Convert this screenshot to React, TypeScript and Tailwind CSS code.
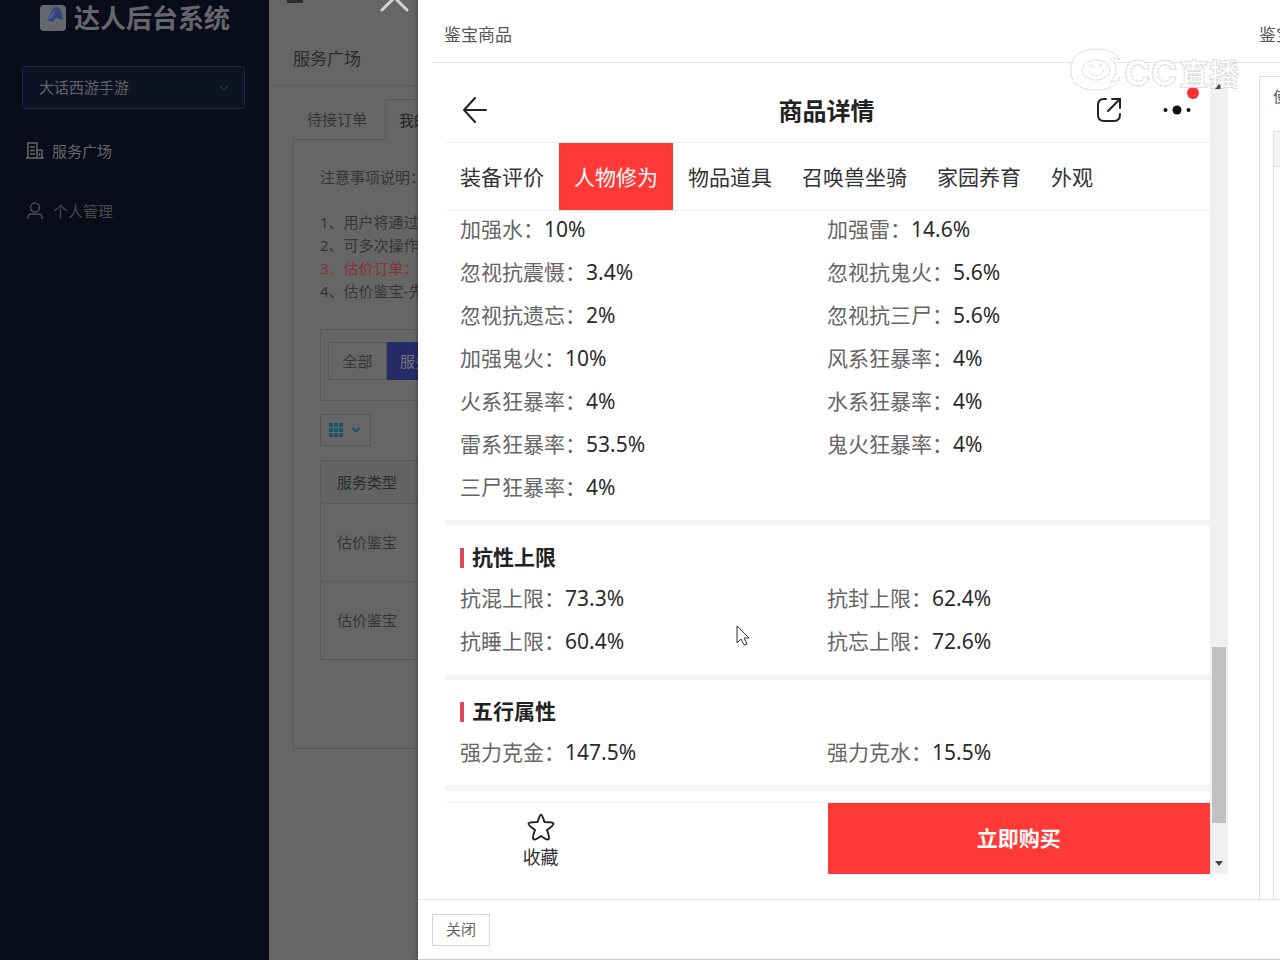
import React from 'react';
import { ChevronDown } from 'lucide-react';

type Stat = { label: string; value: string };

const tabs = ['装备评价', '人物修为', '物品道具', '召唤兽坐骑', '家园养育', '外观'];

const baseStats: Stat[] = [
  { label: '加强水', value: '10%' },
  { label: '加强雷', value: '14.6%' },
  { label: '忽视抗震慑', value: '3.4%' },
  { label: '忽视抗鬼火', value: '5.6%' },
  { label: '忽视抗遗忘', value: '2%' },
  { label: '忽视抗三尸', value: '5.6%' },
  { label: '加强鬼火', value: '10%' },
  { label: '风系狂暴率', value: '4%' },
  { label: '火系狂暴率', value: '4%' },
  { label: '水系狂暴率', value: '4%' },
  { label: '雷系狂暴率', value: '53.5%' },
  { label: '鬼火狂暴率', value: '4%' },
  { label: '三尸狂暴率', value: '4%' },
];

const limitStats: Stat[] = [
  { label: '抗混上限', value: '73.3%' },
  { label: '抗封上限', value: '62.4%' },
  { label: '抗睡上限', value: '60.4%' },
  { label: '抗忘上限', value: '72.6%' },
];

const elementStats: Stat[] = [
  { label: '强力克金', value: '147.5%' },
  { label: '强力克水', value: '15.5%' },
];

const notices = [
  { text: '用户将通过', warn: false },
  { text: '可多次操作', warn: false },
  { text: '估价订单：', warn: true },
  { text: '估价鉴宝-先', warn: false },
];

const StatGrid: React.FC<{ items: Stat[] }> = ({ items }) => (
  <dl className="grid grid-cols-2 pl-[15px]">
    {items.map((item) => (
      <div key={item.label} className="flex h-[43px] items-center text-[21px] leading-7 whitespace-nowrap even:-ml-2">
        <dt className="text-[#666]">{item.label}：</dt>
        <dd className="text-[#2b2b2b]">{item.value}</dd>
      </div>
    ))}
  </dl>
);

const SectionTitle: React.FC<{ children: React.ReactNode }> = ({ children }) => (
  <h3 className="flex h-9 items-center gap-2 px-[15px] text-[21px] font-bold text-[#222]">
    <span className="h-5 w-1 bg-[#dd4a55]"></span>
    {children}
  </h3>
);

const Sidebar = () => (
  <aside className="w-[269px] shrink-0 bg-[#0a0c19] text-[#62646c]">
    <div className="flex h-9 items-center gap-2 pl-10 text-[26px] font-bold text-[#66676d]">
      <svg viewBox="0 0 26 26" className="h-[26px] w-[26px]">
        <rect width="26" height="26" rx="4" fill="#65666f" />
        <path d="M7 15 13 3q5-3 8 2l2 10-7-2-3 4Z" fill="#34447a" />
        <path d="M7 15q8-2 8-10l-5 5Z" fill="#505c8c" />
        <path d="M13 18q5 1 9-3l-3 6Z" fill="#74636c" />
      </svg>
      达人后台系统
    </div>

    <button className="mx-[22px] mt-[30px] flex h-[43px] w-[223px] items-center justify-between rounded-[3px] border border-[#1d2544] bg-[#0e1323] pr-3 pl-4 text-[15px]">
      大话西游手游
      <ChevronDown className="h-4 w-4 text-[#42454f]" strokeWidth={1.5} />
    </button>

    <nav className="mt-3 flex flex-col text-[15px]">
      <a href="#square" className="flex h-[60px] items-center gap-2 pl-[26px] text-[#66676d]">
        <svg viewBox="0 0 18 18" className="h-[18px] w-[18px]" fill="none" stroke="currentColor" strokeWidth="1.5">
          <path d="M2 16V1h9v15M11 8h5v8M0 16h18M4 5h5M4 8.500h5M4 12h5M13.500 11v3" />
        </svg>
        服务广场
      </a>
      <a href="#profile" className="flex h-[60px] items-center gap-[9px] pl-[26px] text-[#484a53]">
        <svg viewBox="0 0 18 18" className="h-[18px] w-[18px]" fill="none" stroke="currentColor" strokeWidth="1.5">
          <circle cx="9" cy="5.500" r="4.500" />
          <path d="M2 17v-2q0-3 4-3h6q4 0 4 3v2" />
        </svg>
        个人管理
      </a>
    </nav>
  </aside>
);

const Square = () => (
  <main className="min-w-0 flex-1 overflow-hidden bg-[#666] text-[15px] whitespace-nowrap text-[#353535]">
    <div className="flex h-8 items-start pl-[18px]">
      <span className="h-[3px] w-4 bg-[#2b2b2b]"></span>
    </div>
    <h1 className="flex h-[54px] items-center border-b border-[#5b5b5b] pl-6 text-[17px] text-[#2d2d2d]">服务广场</h1>

    <div className="pt-[13px] pl-6">
      <div className="flex h-[41px]">
        <button className="w-[92px] border-b border-[#5b5b5b] pr-1">待接订单</button>
        <button className="flex-1 border-t border-l border-[#5b5b5b] pl-[13px] text-left text-[#222]">我的</button>
      </div>
      <section className="h-[609px] border-b border-l border-[#5b5b5b] pl-[26px]">
        <p className="flex h-[71px] items-center pt-1">注意事项说明：</p>
        <ol className="leading-[23px]">
          {notices.map((item, idx) => (
            <li key={idx} className={item.warn ? 'text-[#8a2f35]' : 'text-[#353535]'}>
              {idx + 1}、{item.text}
            </li>
          ))}
        </ol>

        <div className="mt-[26px] flex h-[72px] items-start border border-[#585858] pt-3 pl-[7px]">
          <button className="h-[38px] w-[59px] border border-[#585858]">全部</button>
          <button className="h-[38px] flex-1 bg-[#262c66] pl-[13px] text-left text-[#777]">服务</button>
        </div>

        <button className="mt-[13px] flex h-8 w-[51px] items-center justify-between border border-[#565656] px-2 text-[#1b5664]">
          <svg viewBox="0 0 14 14" className="h-[14px] w-[14px]" fill="currentColor">
            <path d="M0 0h4v4H0zM5 0h4v4H5zM10 0h4v4h-4zM0 5h4v4H0zM5 5h4v4H5zM10 5h4v4h-4zM0 10h4v4H0zM5 10h4v4H5zM10 10h4v4h-4z" />
          </svg>
          <ChevronDown className="h-3 w-3" strokeWidth={4} />
        </button>

        <table className="mt-[14px] w-full border border-[#5a5a5a] text-left">
          <thead>
            <tr className="h-[43px] bg-[#626363] text-[#2b2b2b]">
              <th className="pl-4 font-normal">服务类型</th>
            </tr>
          </thead>
          <tbody>
            <tr className="h-[78px] border-t border-[#5a5a5a]">
              <td className="pl-4">估价鉴宝</td>
            </tr>
            <tr className="h-[78px] border-t border-[#5a5a5a]">
              <td className="pl-4">估价鉴宝</td>
            </tr>
          </tbody>
        </table>
      </section>
    </div>
  </main>
);

const ProductDetail = () => (
  <div className="flex min-h-0 flex-1">
    <article className="flex min-w-0 flex-1 flex-col">
      <header className="flex h-[67px] shrink-0 items-center justify-between border-b border-[#eee] pt-0.5 pr-[19px] pl-[17px]">
        <button aria-label="返回" className="w-[95px]">
          <svg viewBox="0 0 26 26" className="h-[26px] w-[26px]" fill="none" stroke="#222" strokeWidth="2" strokeLinecap="round" strokeLinejoin="round">
            <path d="M24 13H2M13 1 2 13l11 12" />
          </svg>
        </button>
        <h2 className="pt-0.5 text-[24px] font-bold text-[#222]">商品详情</h2>
        <div className="flex w-[95px] items-center justify-between">
          <button aria-label="分享">
            <svg viewBox="0 0 26 26" className="h-[26px] w-[26px]" fill="none" stroke="#222" strokeWidth="2" strokeLinecap="round">
              <path d="M10 2H8Q2 2 2 8v10q0 6 6 6h10q6 0 6-7M16 2h8v9M24 2 12 14" />
            </svg>
          </button>
          <button aria-label="更多" className="relative">
            <svg viewBox="0 0 28 10" className="h-[10px] w-7" fill="#111">
              <circle cx="2.500" cy="5" r="2" />
              <circle cx="14" cy="5" r="4.500" />
              <circle cx="25.500" cy="5" r="2" />
            </svg>
            <span className="absolute -top-[18px] -right-2 h-3 w-3 rounded-full bg-[#ff2f35]"></span>
          </button>
        </div>
      </header>

      <nav className="flex h-[68px] shrink-0 border-b border-[#eee] text-[21px] whitespace-nowrap text-[#333]">
        {tabs.map((tab) => (
          <button key={tab} className={tab === '人物修为' ? 'bg-[#ff3937] px-[15px] pt-0.5 text-white' : 'px-[15px] pt-0.5'}>
            {tab}
          </button>
        ))}
      </nav>

      <div className="min-h-0 flex-1 overflow-hidden">
        <section className="-mt-1 border-b-6 border-[#f5f5f5] pb-3">
          <StatGrid items={baseStats} />
        </section>
        <section className="border-b-6 border-[#f5f5f5] pt-[14px] pb-3">
          <SectionTitle>抗性上限</SectionTitle>
          <StatGrid items={limitStats} />
        </section>
        <section className="border-b-6 border-[#f5f5f5] pt-[14px] pb-3">
          <SectionTitle>五行属性</SectionTitle>
          <StatGrid items={elementStats} />
        </section>
      </div>

      <footer className="grid h-[72px] shrink-0 grid-cols-4 border-t border-[#eee]">
        <button className="flex flex-col items-center justify-center pt-2 text-[18px] leading-8 text-[#333]">
          <svg viewBox="0 0 30 28" className="h-7 w-[30px]" fill="none" stroke="#222" strokeWidth="2" strokeLinejoin="round">
            <path d="M15 1.500q1 0 3.500 7.500 8.500 0 9 1.500t-6.500 6.500q3 8 1.500 9.200T15 23q-6 4.500-7.500 3.200T9 17q-7-5-6.500-6.500T11.500 9Q14 1.500 15 1.500Z" />
          </svg>
          收藏
        </button>
        <button className="col-span-2 col-start-3 bg-[#ff3937] text-[21px] font-bold text-white">立即购买</button>
      </footer>
    </article>

    {/* Scrollbar track */}
    <div className="flex w-[18px] flex-col items-center justify-between bg-[#f0f0f0] pt-2 pb-2">
      <svg viewBox="0 0 8 5" className="h-[5px] w-2" fill="#444">
        <path d="M0 5 4 0l4 5Z" />
      </svg>
      <span className="mt-auto mb-[38px] h-[176px] w-[14px] bg-[#c1c1c1]"></span>
      <svg viewBox="0 0 8 5" className="h-[5px] w-2" fill="#444">
        <path d="M0 0h8L4 5Z" />
      </svg>
    </div>
  </div>
);

const Watermark = () => (
  <div aria-hidden="true" className="pointer-events-none absolute top-[48px] right-[40px]">
    <svg viewBox="0 0 170 44" className="h-11 w-[170px]" fill="#fff" stroke="#d4d4d4" strokeWidth="1" strokeDasharray="3 1">
      <path d="M50 12Q43 1 26 1 1 2 1 22t25 20q20 0 24-13-4 5-9 5 10-12 0-23 5-2 9 1Z" />
      <ellipse cx="26" cy="22" rx="14" ry="10" />
      <path d="M19 23q8 10 16-2M20 18h3M29 17h4" />
      <text x="54" y="38" className="font-['Inter',sans-serif] text-[36px] font-bold">CC</text>
      <text x="109" y="37" className="text-[30px] font-bold">直播</text>
    </svg>
  </div>
);

const Drawer = () => (
  <div className="absolute inset-y-0 right-0 left-[418px] flex flex-col border-b border-[#ccc] bg-white shadow-[0_0_4px_rgba(0,0,0,0.5)]">
    <div className="flex min-h-0 flex-1 overflow-hidden">
      <section className="flex min-w-0 flex-1 flex-col">
        <h2 className="ml-[14px] flex h-[63px] items-center border-b border-[#e6e6e6] pt-2 pl-3 text-[17px] text-[#555]">鉴宝商品</h2>
        <div className="flex min-h-0 flex-1 pt-[13px] pr-[31px] pb-[25px] pl-[27px]">
          <ProductDetail />
        </div>
      </section>
      <section className="flex w-[21px] shrink-0 flex-col overflow-hidden whitespace-nowrap text-[#555]">
        <h2 className="flex h-[63px] shrink-0 items-center border-b border-[#e6e6e6] pt-2 text-[17px]">鉴宝</h2>
        <div className="mt-[13px] flex-1 border-t border-l border-[#ddd] pl-[13px]">
          <p className="flex h-[54px] items-center pb-4 text-[15px]">使</p>
          <div className="h-full border-t border-l border-[#ddd]">
            <div className="h-[35px] border-b border-[#ddd] bg-[#f5f5f5]"></div>
          </div>
        </div>
      </section>
    </div>
    <footer className="flex h-[60px] shrink-0 items-center border-t border-[#e3e3e3] pl-[14px]">
      <button className="h-8 w-[58px] border border-[#d5d5d5] text-[15px] text-[#666]">关闭</button>
    </footer>
    <Watermark />
  </div>
);

export default function App() {
  return (
    <div className="relative flex h-screen min-h-[800px] overflow-hidden font-['Noto_Sans','Noto_Sans_CJK_SC',sans-serif]">
      <Sidebar />
      <Square />
      <button aria-label="关闭弹窗" className="absolute -top-[17px] left-[380px] h-[29px] w-[29px] text-[#d4d4d4]">
        <svg viewBox="0 0 29 29" className="h-full w-full" fill="none" stroke="currentColor" strokeWidth="3" strokeLinecap="round">
          <path d="M2 2 27 27M27 2 2 27" />
        </svg>
      </button>
      <Drawer />

      {/* Mouse pointer */}
      <svg viewBox="0 0 14 22" className="pointer-events-none absolute top-[625px] left-[736px] h-[22px] w-[14px]" fill="#fff" stroke="#333">
        <path d="M1 1v17l4-4 3 6 3-1-3-6h5Z" />
      </svg>
    </div>
  );
}
